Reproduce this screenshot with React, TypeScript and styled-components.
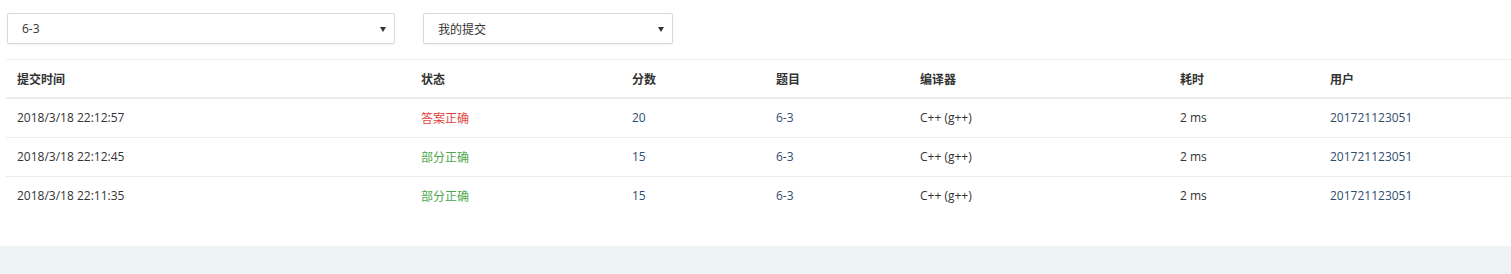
import React from "react";
import styled, { createGlobalStyle } from "styled-components";

const GlobalStyle = createGlobalStyle`
  html, body {
    margin: 0;
    padding: 0;
    background: #eef3f6;
  }
  body {
    font-family: "Open Sans", "Noto Sans CJK SC", sans-serif;
    font-size: 12px;
    color: #333;
  }
`;

const Panel = styled.div`
  background: #fff;
  padding: 13px 0 31px 0;
  box-shadow: 0 1px 1px rgba(0, 0, 0, 0.04);
  overflow: hidden;
`;

const FilterBar = styled.div`
  display: flex;
  gap: 28px;
  padding-left: 7px;
`;

const SelectBox = styled.div<{ $w: number }>`
  width: ${(p) => p.$w}px;
  height: 31px;
  box-sizing: border-box;
  border: 1px solid #dadada;
  border-radius: 2px;
  box-shadow: 0 1px 2px rgba(0, 0, 0, 0.06);
  display: flex;
  align-items: center;
  justify-content: space-between;
  padding: 0 8px 0 14px;
  font-size: 12px;
  color: #333;
`;

const SelectLabel = styled.span<{ $cjk?: boolean }>`
  font-family: ${(p) =>
    p.$cjk ? `"Noto Sans CJK SC", sans-serif` : `"Open Sans", sans-serif`};
`;

const Arrow = styled.span`
  width: 0;
  height: 0;
  border-left: 3px solid transparent;
  border-right: 3px solid transparent;
  border-top: 5px solid #333;
  margin-top: 1px;
`;

const Table = styled.table`
  margin: 15px 0 0 6px;
  width: 1505px;
  border-collapse: collapse;
  table-layout: fixed;
`;

const Col = styled.col<{ $w: number }>`
  width: ${(p) => p.$w}px;
`;

const Th = styled.th`
  text-align: left;
  font-weight: bold;
  font-family: "Noto Sans CJK SC", sans-serif;
  font-size: 12px;
  color: #333;
  padding: 10px 11px 9px;
  line-height: 18px;
  border-top: 1px solid #f0f0f0;
  border-bottom: 2px solid #ececec;
`;

const Td = styled.td<{ $tone?: "red" | "green" | "link" }>`
  padding: 10px 11px;
  line-height: 18px;
  font-size: 12px;
  border-top: 1px solid #ececec;
  white-space: nowrap;
  color: ${(p) =>
    p.$tone === "red"
      ? "#e0463f"
      : p.$tone === "green"
      ? "#4fa84f"
      : p.$tone === "link"
      ? "#2f4d6f"
      : "#333"};
  font-family: ${(p) =>
    p.$tone === "red" || p.$tone === "green"
      ? `"Noto Sans CJK SC", sans-serif`
      : `"Open Sans", "Noto Sans CJK SC", sans-serif`};
`;

const rows = [
  { time: "2018/3/18 22:12:57", status: "答案正确", ok: true, score: "20" },
  { time: "2018/3/18 22:12:45", status: "部分正确", ok: false, score: "15" },
  { time: "2018/3/18 22:11:35", status: "部分正确", ok: false, score: "15" },
];

const widths = [404, 211, 144, 144, 260, 150, 192];

export default function App() {
  return (
    <>
      <GlobalStyle />
      <Panel>
        <FilterBar>
          <SelectBox $w={388}>
            <SelectLabel>6-3</SelectLabel>
            <Arrow />
          </SelectBox>
          <SelectBox $w={250}>
            <SelectLabel $cjk>我的提交</SelectLabel>
            <Arrow />
          </SelectBox>
        </FilterBar>
        <Table>
          <colgroup>
            {widths.map((w, i) => (
              <Col key={i} $w={w} />
            ))}
          </colgroup>
          <thead>
            <tr>
              <Th>提交时间</Th>
              <Th>状态</Th>
              <Th>分数</Th>
              <Th>题目</Th>
              <Th>编译器</Th>
              <Th>耗时</Th>
              <Th>用户</Th>
            </tr>
          </thead>
          <tbody>
            {rows.map((r) => (
              <tr key={r.time}>
                <Td>{r.time}</Td>
                <Td $tone={r.ok ? "red" : "green"}>{r.status}</Td>
                <Td $tone="link">{r.score}</Td>
                <Td $tone="link">6-3</Td>
                <Td>C++ (g++)</Td>
                <Td>2 ms</Td>
                <Td $tone="link">201721123051</Td>
              </tr>
            ))}
          </tbody>
        </Table>
      </Panel>
    </>
  );
}
